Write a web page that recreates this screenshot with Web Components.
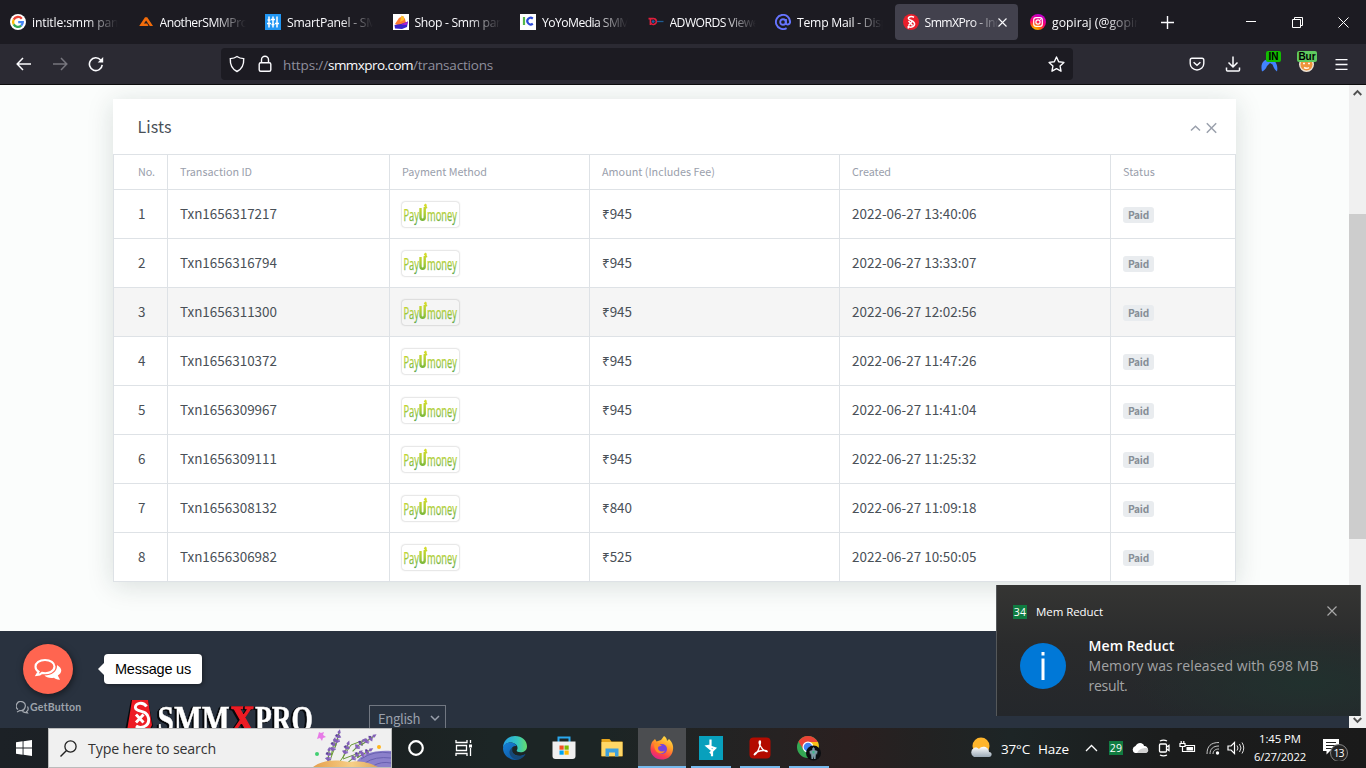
<!DOCTYPE html>
<html lang="en">
<head>
<meta charset="utf-8">
<title>SmmXPro - Transactions</title>
<style>
html,body{margin:0;height:100%;overflow:hidden}
body{font-family:"Open Sans","Noto Sans",sans-serif}
</style>
</head>
<body>
<desktop-screen></desktop-screen>
<script>
const define = (name, css, html, setup) => {
  customElements.define(name, class extends HTMLElement {
    connectedCallback() {
      if (this.shadowRoot) return;
      const root = this.attachShadow({ mode: 'open' });
      root.innerHTML = '<style>*{box-sizing:border-box}svg{display:block;flex:none}' + css + '</style>' + (typeof html === 'function' ? html(this) : html);
      if (setup) setup(this, root);
    }
  });
};
const svg = (w, h, body, extra = '') => `<svg width="${w}" height="${h}" viewBox="0 0 ${w} ${h}" fill="none" ${extra}>${body}</svg>`;

/* Favicons */
const fav = {
  google: svg(16,16,'<circle cx="8" cy="8" r="8" fill="#fff"/><g stroke-width="2.3"><path d="M11.8 4.7A4.9 4.9 0 0 0 3.7 5.6" stroke="#ea4335"/><path d="M3.7 5.6a4.9 4.9 0 0 0 0 4.8" stroke="#fbbc05"/><path d="M3.7 10.4a4.9 4.9 0 0 0 7.5 1.3" stroke="#34a853"/><path d="M11.2 11.7A4.9 4.9 0 0 0 12.8 8.1H8.2" stroke="#4285f4"/></g>'),
  another: svg(16,16,'<path d="M1.2 12 7 3.2h2.2L15 12h-3.2L8.1 6.4 6 9.6h3.2l1.3 2.4z" fill="#f36c0a"/>'),
  smart: svg(16,16,'<path d="M0 0h16v16H0z" fill="#2196f3"/><path d="M4 2.5v11M8 2.5v11M12 2.5v11" stroke="#fff" stroke-width="1.5"/><path d="M2 9.5h4M6 5.5h4M10 9.5h4M2.5 6h3M6.5 10.5h3" stroke="#fff" stroke-width="1.6"/>'),
  shop: svg(16,16,'<path d="M0 0h16v16H0z" fill="#fff"/><path d="M2 10 6 4l4-2 2 3 1 4-6 3z" fill="#ff7a2f"/><path d="M8.5 1.5 11 3v3l-4 2z" fill="#ffc02e"/><path d="M1.5 11 8 10l7-2.5-1 5.5-5 2-7-.5z" fill="#3a24c9"/><path d="M8 10.5 15 7.5 13.5 11z" fill="#b01fd0"/>'),
  yoyo: svg(16,16,'<path d="M0 0h16v16H0z" fill="#fff"/><path d="M4 3v8" stroke="#54b848" stroke-width="2.2"/><path d="M12.8 4.6A3.3 3.3 0 1 0 12.8 9.6" stroke="#2a49d8" stroke-width="2.1"/>'),
  ad: svg(16,16,'<path d="M.5 4.600H2.400V11M2.400 4.600h2.300a3 3 0 1 1-2.300 3" stroke="#e01f3d" stroke-width="1.6"/><circle cx="5.200" cy="7.600" r="1.400" fill="#1d5fa8"/><path d="M8.800 7.500h6.700" stroke="#1f5c93" stroke-width="1.300"/>'),
  temp: svg(16,16,'<g stroke="#6674ff" stroke-width="1.9"><circle cx="8" cy="8" r="2.8"/><path d="M10.9 5v4.100c0 2 4.200 2.100 4.200-1.100A7.100 7.100 0 1 0 11.600 14.100"/></g>'),
  smmx: svg(16,16,'<circle cx="8" cy="8" r="8" fill="#e81f2b"/><path d="M11 3.2C8 1.8 5 3 5.4 4.6S12 6.8 11.6 10.2 6.3 13.8 5 12M5.5 7l4 4.4M9.5 7l-4 4.4M5.3 12v2.5" stroke="#fff" stroke-width="1.5"/>'),
  insta: svg(16,16,'<defs><radialGradient id="ig" cx=".3" cy="1.05" r="1.1"><stop offset="0" stop-color="#ffd600"/><stop offset=".3" stop-color="#ff7a00"/><stop offset=".6" stop-color="#ff0069"/><stop offset="1" stop-color="#b900d8"/></radialGradient></defs><circle cx="8" cy="8" r="8" fill="url(#ig)"/><rect x="3.7" y="3.7" width="8.6" height="8.6" rx="2.4" stroke="#fff" stroke-width="1.2"/><circle cx="8" cy="8" r="2.1" stroke="#fff" stroke-width="1.2"/><circle cx="10.5" cy="5.5" r=".6" fill="#fff"/>')
};

define('desktop-screen', ':host{display:flex;flex-direction:column;width:1366px;height:768px;overflow:hidden;position:relative}.view{height:643px;display:flex;flex:none}toast-note{position:absolute;left:996px;top:585px}chat-widget{position:absolute;left:15px;top:644px}',
  '<browser-tabs></browser-tabs><browser-toolbar></browser-toolbar><div class="view"><web-page></web-page><page-scrollbar></page-scrollbar></div><task-bar></task-bar><chat-widget></chat-widget><toast-note></toast-note>');

/* Tab strip */
const tabs = [['google','intitle:smm panel',96],['another','AnotherSMMProvider',114],['smart','SmartPanel - SMM Panel',134],['shop','Shop - Smm panel',98],['yoyo','YoYoMedia SMM Panel',119],['ad','ADWORDS Viewers',99],['temp','Temp Mail - Disposable',127],['smmx','SmmXPro - Indian',93],['insta','gopiraj (@gopiraj_)',106]];
define('browser-tabs', ':host{display:flex;height:44px;background:#1c1b22;flex:none;padding-left:2px;align-items:center}.tabs{display:grid;grid-template-columns:repeat(9,127.5px)}.plus{margin-left:11px}.win{display:flex;margin-left:auto;gap:35px;padding-right:17px;align-items:center}',
  () => '<div class="tabs">' + tabs.map((t,i) => `<browser-tab icon="${t[0]}" ${i===7?'active':''}><ui-text w="${t[2]}">${t[1]}</ui-text></browser-tab>`).join('') + '</div>' +
  '<svg class="plus" width="13" height="13" stroke="#fbfbfe" stroke-width="1.4"><path d="M6.5 0v13M0 6.5h13"/></svg>' +
  '<div class="win">' + svg(12,12,'<path d="M1 5.5h10" stroke="#fff"/>') + svg(11,11,'<path d="M.5 2.5h8v8h-8zM2.5 2.500v-2h8v8h-2" stroke="#fff"/>') + svg(11,11,'<path d="m.5.5 10 10m0-10-10 10" stroke="#fff"/>') + '</div>');
define('browser-tab', ':host{display:flex;align-items:center;height:36px;width:123px;padding-left:8px;gap:6px;font-size:12.2px;line-height:16px;color:#fbfbfe;border-radius:4px}:host([active]){background:#42414d}.t{width:86px;height:19px;padding-top:2px;overflow:hidden;-webkit-mask-image:linear-gradient(90deg,#000 62%,transparent)}:host([active]) .t{width:74px;margin-right:-7px}',
  h => fav[h.getAttribute('icon')] + '<span class="t"><slot></slot></span>' + (h.hasAttribute('active') ? svg(9,9,'<path d="m.5.5 8 8m0-8-8 8" stroke="#fbfbfe" stroke-width="1.1"/>') : ''));

/* Navigation toolbar */
define('browser-toolbar', ':host{display:flex;height:41px;background:#2b2a33;border-bottom:1px solid #0c0c0d;align-items:center;flex:none;padding-left:16px;color:#fbfbfe}.nav{display:flex;gap:20px;width:205px}.url{width:852px;height:32px;background:#1c1b22;border-radius:4px;display:flex;align-items:center;padding:0 8px;font-size:13.5px;line-height:20px;color:#8f8f9d}.url svg:last-child{margin-left:auto}.site{color:#fbfbfe}.ext{display:flex;gap:20px;margin-left:auto;padding-right:18px;align-items:center}.addr{margin-left:10px;padding-top:2px}.lock{margin-left:12px}',
  '<div class="nav">' + svg(16,16,'<path d="M15 8H1.5M7 2 1.2 8 7 14" stroke="#fbfbfe" stroke-width="1.5"/>') + svg(16,16,'<path d="M1 8h13.5M9 2l5.800 6L9 14" stroke="#77767e" stroke-width="1.5"/>') + svg(16,16,'<path d="M14.2 8.8a6.4 6.4 0 1 1-1.5-4.8" stroke="#fbfbfe" stroke-width="1.6"/><path d="M15.200 1v5.500H9.700z" fill="#fbfbfe"/>') + '</div>' +
  '<div class="url">' + svg(16,18,'<path d="M8 1.500C6 3 3.500 3.500 1.300 3.600 1 9 3 14 8 16.500 13 14 15 9 14.700 3.600 12.500 3.500 10 3 8 1.500z" stroke="#fbfbfe" stroke-width="1.4"/>') +
  svg(16,18,'<rect x="2.200" y="7.700" width="11.600" height="8.600" rx="1.500" stroke="#fbfbfe" stroke-width="1.4"/><path d="M4.500 7.500V4.800a3.500 3.500 0 0 1 7 0v2.700" stroke="#fbfbfe" stroke-width="1.4"/>','class="lock"') +
  '<span class="addr"><ui-text w="45">https://</ui-text><ui-text class="site" w="85">smmxpro.com</ui-text><ui-text w="80">/transactions</ui-text></span>' +
  svg(17,17,'<path d="m8.500 1 2.200 4.700 5.200.7-3.800 3.600.9 5.200-4.500-2.500L4 15.200l.9-5.200L1.100 6.400l5.200-.7z" stroke="#fbfbfe" stroke-width="1.4" stroke-linejoin="round"/>') + '</div>' +
  '<div class="ext">' + svg(16,16,'<path d="M3 2.200h10q1.800 0 1.800 1.800v3.500a6.800 6.500 0 0 1-13.600 0V4Q1.200 2.200 3 2.200z" stroke="#fbfbfe" stroke-width="1.4"/><path d="m4.600 6.300 3.400 3 3.400-3" stroke="#fbfbfe" stroke-width="1.500"/>') + svg(16,16,'<path d="M8 .5v10M3.500 6.500 8 11l4.500-4.500M1.500 11.500V14q0 1 1 1h11q1 0 1-1v-2.500" stroke="#fbfbfe" stroke-width="1.5"/>') +
  '<ext-icon label="IN" color="#12bc00"></ext-icon><ext-icon label="Bur" color="#5fca5f"></ext-icon>' + svg(13,13,'<path d="M.5 1.600h12M.5 6.500h12M.5 11.400h12" stroke="#fbfbfe" stroke-width="1.3"/>') + '</div>');
define('ext-icon', ':host{display:block;position:relative;width:17px;height:22px}:host([label=IN]) i{left:5px;width:15px}i{position:absolute;left:-1px;top:-2px;width:20px;height:11px;overflow:hidden;border-radius:2px;color:#000;font:bold 10px/11px "Liberation Sans";text-align:center}svg{margin-top:3px}',
  h => (h.getAttribute('label') === 'IN' ? svg(17,17,'<path d="M1 15.500C-1 7 3 4 7 3l2 1 2-1c5 3 6 8 5 12.500-1.500-1-3-3-4.500-7L9 7l-3 3c-1 3-3 4.500-5 5.500z" fill="#4283ff"/>') : svg(17,17,'<circle cx="8.500" cy="8.500" r="7.500" fill="#eee2d4"/><circle cx="8.500" cy="8.500" r="6" fill="#ef943b"/><path d="M5 7.500h2m3 0h2M6 11.500q3 1.500 5 0" stroke="#fff6e8" stroke-width="1.500"/>')) + `<i style="background:${h.getAttribute('color')}">${h.getAttribute('label')}</i>`);

define('page-scrollbar', ':host{width:17px;background:#f0f0f0;display:flex;flex-direction:column;align-items:center}.track{flex:1;width:17px;padding-top:112px}.thumb{height:325px;background:#cdcdcd}svg{flex:none}',
  svg(17,17,'<path d="m4.700 10 3.800-3.900 3.800 3.900" stroke="#505050" stroke-width="1.9"/>') + '<div class="track"><div class="thumb"></div></div>' + svg(17,17,'<path d="m4.700 7 3.800 3.900 3.800-3.900" stroke="#505050" stroke-width="1.9"/>'));

/* Web page */
define('web-page', ':host{width:1349px;height:643px;background:#fbfdfc;display:flex;flex-direction:column;overflow:hidden;font-family:"Noto Sans CJK SC","Noto Sans",sans-serif;color:#495057}main{height:546px;padding:14px 113px 0;flex:none;overflow:hidden}',
  '<main><transactions-card></transactions-card></main><site-footer></site-footer>');
const rows = [['Txn1656317217','945','13:40:06'],['Txn1656316794','945','13:33:07'],['Txn1656311300','945','12:02:56'],['Txn1656310372','945','11:47:26'],['Txn1656309967','945','11:41:04'],['Txn1656309111','945','11:25:32'],['Txn1656308132','840','11:09:18'],['Txn1656306982','525','10:50:05']];
define('transactions-card', ':host{display:block;width:1123px;background:#fff;box-shadow:0 4px 25px rgba(20,50,40,.15)}header{height:55px;display:flex;align-items:center;padding:0 19px 2px 24.5px;font-size:16px;line-height:20px}.tools{margin-left:auto;display:flex;gap:5px;padding-top:4px}.table{border:1px solid #dee2e6;border-width:1px 0 0 1px}',
  () => '<header><ui-text w="34">Lists</ui-text><span class="tools">' + svg(11,12,'<path d="m1 8.500 4.500-4.300L10 8.500" stroke="#9aa0ac" stroke-width="1.500"/>') + svg(11,12,'<path d="m.8 1.300 9.400 9.400m0-9.400-9.400 9.400" stroke="#9aa0ac" stroke-width="1.500"/>') + '</span></header><div class="table"><table-row head>' +
  [['No.',17],['Transaction ID',72],['Payment Method',85],['Amount (Includes Fee)',113],['Created',39],['Status',32]].map((c,i) => `<ui-text slot="c${i}" w="${c[1]}">${c[0]}</ui-text>`).join('') + '</table-row>' +
  rows.map((r,i) => `<table-row ${i===2?'hover':''}><ui-text slot="c0" w="7.500">${i+1}</ui-text><ui-text slot="c1" w="97">${r[0]}</ui-text><pay-logo slot="c2"></pay-logo><ui-text slot="c3" w="30">₹${r[1]}</ui-text><ui-text slot="c4" w="124.500">2022-06-27 ${r[2]}</ui-text><status-tag slot="c5">Paid</status-tag></table-row>`).join('') + '</div>');
define('table-row', ':host{display:grid;grid-template-columns:54px 222px 200px 250px 271px 125px;height:49px;font-size:13.450px;line-height:20px}:host([head]){height:35px;font-size:10.800px;color:#9aa0ac}:host([hover]){background:#f5f5f5}div{border:1px solid #dee2e6;border-width:0 1px 1px 0;padding:0 0 2px 12px;display:flex;align-items:center}.c0{padding-left:24px}',
  [0,1,2,3,4,5].map(i => `<div class="c${i}"><slot name="c${i}"></slot></div>`).join(''));
define('status-tag', ':host{display:block;width:31px;height:16px;margin-top:4px;border-radius:3px;background:#e9ecef;color:#868e96;font-weight:700;font-size:10.100px;line-height:16px;text-align:center}', '<ui-text w="21"><slot></slot></ui-text>');
define('pay-logo', ':host{display:block;width:57px;height:25px;margin:2px 0 0 -.5px;border-radius:3px;box-shadow:0 0 2px rgba(0,0,0,.35)}text{font-family:"Open Sans","Noto Sans",sans-serif}',
  svg(57,25,'<defs><linearGradient id="g" gradientUnits="userSpaceOnUse" x1="0" y1="3" x2="0" y2="23"><stop offset="0" stop-color="#d5dc2a"/><stop offset=".5" stop-color="#a4cb39"/><stop offset="1" stop-color="#55a53c"/></linearGradient></defs><g fill="url(#g)" stroke="url(#g)" stroke-width=".25"><text x="1.500" y="18.500" font-size="15.500" textLength="15.500" lengthAdjust="spacingAndGlyphs">Pay</text><text x="25" y="18.500" font-size="15.500" textLength="30" lengthAdjust="spacingAndGlyphs">money</text></g><path d="M18.500 6v9.500q0 2.200 2.100 2.200t2.100-2.200V6l2.300-1M22.500 2.500l1.800 1.500" stroke="url(#g)" stroke-width="2.400"/>'));

/* Site footer with language picker */
define('site-footer', ':host{display:flex;height:97px;flex:none;background:#29323f;padding:68px 0 0 125px;overflow:hidden}.word{font-size:38px;fill:#fff;stroke:#fff;stroke-width:.5px;filter:drop-shadow(-1px 1px 0 #06080b) drop-shadow(-1px 0 0 #06080b)}.lang{margin:6px 0 0 55px;width:77px;height:29px;border:1px solid #717781;display:flex;gap:10px;align-items:center;padding-left:8px;padding-bottom:3px;font-size:13.200px;color:#9aa0ac}',
  svg(189,32,'<path d="M6 1h17l5 26-4 5H0z" fill="#07090c"/><path d="M7 1h16l4 25-3 6H2z" fill="#ed1c24"/><path d="M21.500 7.500C18 2 9.500 4 10.500 9s11.500 1 13 10-8.500 11-12.500 8M11 15.500l7.500 8m0-8-7.500 8" stroke="#fff" stroke-width="2.900"/><g class="word" font-family="Liberation Serif" font-weight="700"><text x="32.500" y="33" textLength="72" lengthAdjust="spacingAndGlyphs">SMM</text><text x="105.500" y="33" style="fill:#ed1c24;stroke:#ed1c24;stroke-width:1.500px" textLength="24" lengthAdjust="spacingAndGlyphs">X</text><text x="130" y="33" textLength="58" lengthAdjust="spacingAndGlyphs">PRO</text></g>') +
  '<div class="lang"><ui-text w="42">English</ui-text>' + svg(10,8,'<path d="m1 2 4 4 4-4" stroke="#9aa0ac" stroke-width="1.500"/>') + '</div>');

define('chat-widget', ':host{display:grid;grid-template-columns:66px auto;column-gap:23px;color:#9da3ab;width:190px}.b{width:50px;height:50px;margin-left:8px;border-radius:50%;background:#ff6550;box-shadow:1px 2px 7px rgba(0,0,0,.5);display:grid;place-items:center}.m{position:relative;width:98px;height:30px;margin-top:10px;border-radius:4px;background:#fff;color:#000;font:14.500px/30px "Liberation Sans",sans-serif;text-align:center;box-shadow:1px 1px 4px rgba(0,0,0,.4)}.m:before{content:"";position:absolute;left:-6px;top:9px;border:6px solid transparent;border-left:0;border-right-color:#fff}.g{display:flex;align-items:center;gap:1px;height:14px;margin:6px 0 0 1px;font:700 10.500px/14px Lato,sans-serif}',
  '<div class="b">' + svg(28,23,'<path d="M11 2C5.500 2 1.500 4.900 1.500 8.700c0 2.100 1.200 3.800 3.100 5L2.700 17c2.700-.2 4.100-1 5.200-2.100 7 1.300 12.600-1.700 12.600-6.300C20.500 4.900 16.500 2 11 2z" stroke="#fff" stroke-width="2.100"/><path d="M23 7c7 4 4 9 .8 10.500l2.200 4.200c-3 .1-5-1-6-2-4.500.7-8-.6-9.500-2.200C18 17.500 23.500 13.500 23 7z" fill="#fff"/>') + '</div><div class="m"><ui-text w="76">Message us</ui-text></div><div class="g">' + svg(13,13,'<path d="M2 8.500A4.500 4.500 0 1 1 9 6.500c-.8 2.500-3 3.500-5 3L1 11M11.500 5.500c1.500 3 0 4.500-1 5l1 1.500c-2.500-.3-4-.8-5-1.500" stroke="#a4a9b0" stroke-width="1.200"/>') + '<ui-text w="51">GetButton</ui-text></div>');

/* Notification toast */
define('toast-note', ':host{display:block;width:365px;height:131px;background:radial-gradient(ellipse at 85% 75%,#21312e,transparent 40%),linear-gradient(#353533,#2a2b2c 45%,#24272b);border:1px solid #55585a;border-width:0 1px 0 1px;color:#fff;padding:18px 23px 0 16px}header{display:flex;align-items:center;height:17px;font-size:11.500px;gap:9px}b.n,header svg{flex:none}.n{width:14px;height:14px;background:#107c41;font:400 10.500px/14px "Open Sans";text-align:center}header svg{margin:-2px 0 0 auto}section{display:flex;margin-top:15px}.i{margin:8px 23px 0 6.500px}.x{font-size:14px;line-height:20px;color:#a3a4a5;padding-top:1px}h3{margin:0;font-size:14px;line-height:20px;font-weight:600;color:#fff}',
  '<header><b class="n"><ui-text w="12.500">34</ui-text></b><ui-text w="67">Mem Reduct</ui-text>' + svg(10,10,'<path d="m.5.5 9 9m0-9-9 9" stroke="#a8a8a8" stroke-width="1.200"/>') + '</header><section><div class="i">' + svg(46,46,'<circle cx="23" cy="23" r="23" fill="#0078d7"/><path d="M21.500 9h3v3.500h-3zM21.500 15.500h3V37h-3z" fill="#fff"/>') + '</div><div class="x"><h3><ui-text w="86">Mem Reduct</ui-text></h3><ui-text w="230">Memory was released with 698 MB</ui-text><br><ui-text w="39">result.</ui-text></div></section>');

/* Task bar */
const flower = (x,y,r) => `<g transform="translate(${x} ${y}) rotate(${r}) scale(.85)"><path d="M0 4v-18" stroke="#6b9a3a" stroke-width="1.300"/><path d="M-2-14l2-4 2 4-2 2zM-4-9l3-3 1 2 1-2 3 3-4 2zM-4-4l3-2 1 1 1-1 3 2-4 3z" fill="#8361b8"/><circle cx="-2" cy="-10" r="1.200" fill="#5e4296"/><circle cx="2" cy="-5" r="1.200" fill="#a58ad0"/></g>`;
const app = {
  cortana: svg(24,24,'<circle cx="12" cy="12" r="6.800" stroke="#fff" stroke-width="2.200"/>'),
  view: svg(24,24,'<path d="M4 4v2.500h11V4M4 20v-2.500h11V20M4.500 9.500h10v5h-10zM18.500 4v3M18.500 12v8" stroke="#fff" stroke-width="1.300"/><path d="M17 8.500h3v3h-3z" fill="#fff"/>'),
  edge: svg(24,24,'<defs><linearGradient id="e1" x2="1"><stop stop-color="#249fe8"/><stop offset=".6" stop-color="#35c5be"/><stop offset="1" stop-color="#65dc6b"/></linearGradient><linearGradient id="e2" x2="1" y2="1"><stop stop-color="#1681d8"/><stop offset="1" stop-color="#0c4d94"/></linearGradient></defs><path d="M0 12C0 5 5 0 12 0s12 4.700 12 10.200c0 4-3 6-6.500 6-3 0-4.500-1-3.500-2.200C16 10 12 6.500 7.500 6.500 4 6.500 1 9 0 12z" fill="url(#e1)"/><path d="M0 12c1-4 4-5.500 7.500-5.500 3 0 5.500 1.500 6 3.500C9 9.500 7.500 13 9 16c2 4 8.500 5 13.500 2C18 25 10 25 6 22 2 20 0 16 0 12z" fill="url(#e2)"/><path d="M9.500 12c-2 7 7 10.500 13 6-4.500 7-10 6.500-13.500 3.500s-3.500-8 .5-9.500z" fill="#164978"/>'),
  store: svg(24,24,'<path d="M6.500 7V1.500h11V7" stroke="#2aa8ee" stroke-width="2"/><path d="M.5 5.500h23V20q0 3-3 3h-17q-3 0-3-3z" fill="#f0f0f0"/><path d="M7.500 9.500h4.200v4.200H7.500z" fill="#f25022"/><path d="M12.500 9.500h4.200v4.200h-4.200z" fill="#7fba00"/><path d="M7.500 14.500h4.200v4.200H7.500z" fill="#00a4ef"/><path d="M12.500 14.500h4.200v4.200h-4.200z" fill="#ffb900"/>'),
  files: svg(24,24,'<path d="M1.500 3h8l2 2.500h11v15h-21z" fill="#e6a51c"/><path d="M1.500 6h21v14h-21z" fill="#ffd766"/><path d="M5.500 20.500v-8h13v8h-3.500v-4H9v4z" fill="#3ca0df"/>'),
  firefox: svg(24,24,'<defs><linearGradient id="f" x1=".8" y1="0" x2=".3" y2="1"><stop stop-color="#ffe84a"/><stop offset=".4" stop-color="#ff9f27"/><stop offset=".75" stop-color="#ff4048"/><stop offset="1" stop-color="#dc2090"/></linearGradient></defs><path d="M2 6 5 3l1.500 2.500L11 4l3-4c2 1 3 3 3 5l2-2c4 4 5 8 3.500 13-1.500 5-6 7.500-10.500 7.500C5 23.500.500 18.500.500 13c0-3 .5-4.500 1.500-7z" fill="url(#f)"/><circle cx="12" cy="13" r="5" fill="#7644dc"/><path d="M4 8q4-2 8 2-4-.5-4 2c0 3 4 4.500 7 2.500-2 5-11 4-11-6.500z" fill="#ff8f24"/>'),
  burp: svg(24,24,'<path d="M0 0h24v24H0z" fill="#08a0bd"/><path d="M11.500 3.500v6L8 10.200 13 14.300v6M11 10.500l5 1.800-5 5" stroke="#fff" stroke-width="2.200"/>'),
  pdf: svg(24,24,'<rect x="1.500" y="1.500" width="21" height="21" rx="4" fill="#b30b00"/><path d="M12 5c-2.500 0 .5 7.500 5 10 3 1.700 3-.5 0-.5-4 0-9 1.500-10.500 3.500-1 1.500 1 1 2.500-1.500C11 13.500 13.500 5 12 5z" stroke="#fff" stroke-width="1.300"/>'),
  chrome: svg(26,26,'<circle cx="12" cy="12" r="11" fill="#34a853"/><path d="M2.500 6.500a11 11 0 0 1 19 0L22 9H12L7 14z" fill="#ea4335"/><path d="M12 7h10c3 8-3 16-10 16l5-8z" fill="#fbc116"/><circle cx="12" cy="12" r="5.500" fill="#fff"/><circle cx="12" cy="12" r="4.300" fill="#4285f4"/><circle cx="17.500" cy="18" r="7.500" fill="#0b0d10"/><path d="m17.500 12 1.500 2-.5 1 3 1-.5 4-1-2-.5 6h-1.500l-.5-3-.5 3H15.500l-.5-6-1 2-.5-4 3-1-.5-1z" fill="#7d9aa5"/><path d="M16.500 16h2v2.500h-2z" fill="#39b88a"/>')
};
define('task-bar', ':host{display:flex;height:40px;flex:none;background:linear-gradient(90deg,#1c2126,#1b1d1f 20%,#1c2525 36%,#1c2525 44%,#262222 57%,#2a2020 62%,#222 68%,#1d2526 74%,#1b1c1c 86%,#1a1a1a);color:#fff}.start{width:48px;display:grid;place-items:center}.search{width:344px;background:#f0f0f0;border:1px solid #bbb;color:#333;display:flex;align-items:center;padding-left:11px;font-size:14.2px;line-height:20px;overflow:hidden}.search ui-text{margin:2px 0 0 11px}.art{margin-left:auto}.apps{display:flex}.tray{display:flex;align-items:center;margin-left:auto;width:397px}.tray>*{flex:none}.w{font-size:13.500px;display:flex;gap:8px;margin:0 16px 0 9px;line-height:20px;padding-top:1px}.n{width:14px;height:14px;background:#107c41;font:10.500px/14px "Open Sans";text-align:center;margin:0 8px 0 11px}.clock{font-size:11.3px;line-height:18px;width:52px;margin-left:9px;text-align:center}.act{margin-left:17px}',
  '<div class="start">' + svg(16,16,'<path d="M0 2.300 6.600 1.300v6.200H0zM7.500 1.200 16 0v7.500H7.500zM0 8.400h6.600v6.300L0 13.700zM7.500 8.400H16V16l-8.500-1.200z" fill="#fff"/>') + '</div><div class="search">' +
  svg(17,17,'<circle cx="10.500" cy="6.500" r="5.600" stroke="#222" stroke-width="1.300"/><path d="M6.500 10.500.500 16.500" stroke="#222" stroke-width="1.400"/>') + '<ui-text w="128">Type here to search</ui-text>' +
  svg(78,38,'<defs><linearGradient id="s" x2="1"><stop stop-color="#e5a04d"/><stop offset=".6" stop-color="#f7cf86"/><stop offset="1" stop-color="#dca75e"/></linearGradient></defs><path d="M42 38C44 25 60 21 78 22v16z" fill="#8b80cb"/><path d="M48 30q13-9 30-6M52 34q10-7 26-5M60 37q8-5 18-3" stroke="#6860b0"/><path d="M16 34 25 10M26 34 38 16 54 10M30 30 46 24" stroke="#6b9a3a"/>' + flower(15,33,5)+flower(31,26,20)+flower(42,20,45)+flower(51,14,55)+flower(38,31,50)+flower(47,27,60)+flower(19,23,12)+flower(23,15,15) + '<path d="M0 38C9 31 23 30 36 33q14-3 29 5z" fill="url(#s)"/><path d="m6 3 2 1 3-1-1 3 3 2-3 1-1 3-2-3-3 1 1-3z" fill="#e77be7"/><circle cx="4" cy="25" r="2" fill="#42cf72"/><circle cx="66" cy="18" r="2" fill="#ffb51d"/>','class="art"') + '</div><div class="apps">' +
  [['cortana',48],['view',48],['edge',54],['store',44],['files',52],['firefox',48],['burp',49],['pdf',49],['chrome',49]].map((a,i) => `<task-app style="width:${a[1]}px" name="${a[0]}" ${i===5?'active':''} ${i>5?'open':''}></task-app>`).join('') + '</div><div class="tray">' +
  svg(23,22,'<defs><linearGradient id="c" x2="0" y2="1"><stop stop-color="#fff"/><stop offset="1" stop-color="#9ba9b6"/></linearGradient></defs><circle cx="12" cy="9" r="8.500" fill="#ffb52b"/><path d="M5 20a5 5 0 0 1 0-9c2-1 4 0 5 1 3-4 10-2 10 3 4 0 3 5 0 5z" fill="url(#c)"/>') +
  '<span class="w"><ui-text w="29">37°C</ui-text><ui-text w="31">Haze</ui-text></span>' + svg(13,8,'<path d="m1 7 5.500-5.500L12 7" stroke="#fff" stroke-width="1.300"/>') + '<span class="n"><ui-text w="12.500">29</ui-text></span>' +
  svg(18,12,'<path d="M4 11a3.700 3.700 0 0 1 .5-7C7-1 13 1 13 4c5-.5 5 7 1 7z" fill="#fff"/><path d="M6 11c2-4 5-5 10-5 3 3 0 5-2 5z" fill="#d1d1d1"/>') +
  svg(15,18,'<rect x="2.500" y="5" width="7" height="8" rx="1" stroke="#fff" stroke-width="1.300"/><path d="m9.500 8 2.500-1.500v5L9.500 10M3 2q3.500-1.800 7 0M3 16q3.500 1.800 7 0" stroke="#fff" stroke-width="1.300"/>','style="margin-left:8px"') +
  svg(17,16,'<path d="M6.500 5.500h9v6h-9M1 3.500h5v3H1zM2.200 1v2M4.800 1v2M3.500 7v4.500h3" stroke="#fff" stroke-width="1.200"/><path d="M7.500 7H14v3.500H7.500z" fill="#fff"/>','style="margin-left:7px"') +
  svg(14,14,'<path d="M1 13C1 5 5 1.500 13 1.500M4 13c0-5 3-8 9-8M7 13c0-3 2-5 6-5" stroke="#c8c8c8"/><circle cx="11.500" cy="12" r="1.700" fill="#fff"/>','style="margin-left:10px"') +
  svg(18,14,'<path d="M1 5h3l3.500-3.500v11L4 9H1z" stroke="#fff" stroke-width="1.200"/><path d="M10 4.500q2 2.500 0 5M12.500 3q3 4 0 8M15 1.500q3.500 5.500 0 11" stroke="#e0e0e0"/>','style="margin-left:7px"') +
  '<span class="clock"><ui-text w="42">1:45 PM</ui-text><br><ui-text w="52">6/27/2022</ui-text></span>' +
  svg(26,26,'<path d="M0 4h16v12H7l-3.500 3.500V16H0z" fill="#fff"/><path d="M3 7.500h10M3 10.500h10M3 13.500h7" stroke="#222"/><circle cx="16" cy="18" r="8.500" fill="#242424" stroke="#858585"/><text x="16" y="21.800" fill="#fff" font-size="10.500" text-anchor="middle" font-family="Open Sans" textLength="11">13</text>','class="act"') + '</div>');
define('task-app', ':host{display:grid;place-items:center;height:40px;border-bottom:2px solid transparent;padding-top:2px}:host([active]){background:#4b4d50;border-bottom-color:#76b9ed}:host([open]){background:linear-gradient(#76b9ed,#76b9ed) 5px 38px/40px 2px no-repeat;background-origin:border-box;background-clip:border-box}',
  h => app[h.getAttribute('name')]);

/* Single-line label whose tracking is adjusted to the width given in w */
define('ui-text', ':host{display:inline-block;white-space:nowrap}span{display:inline-block;white-space:nowrap}', '<span><slot></slot></span>', (h, root) => {
  const s = root.querySelector('span'), w = parseFloat(h.getAttribute('w'));
  const assigned = root.querySelector('slot').assignedNodes({ flatten: true });
  const n = assigned.map(x => x.textContent).join('').trim().length;
  const natural = s.getBoundingClientRect().width;
  if (n && natural) s.style.letterSpacing = ((w - natural) / n).toFixed(3) + 'px';
  h.style.width = w + 'px';
  h.style.textAlign = 'left';
});
</script>
</body>
</html>
